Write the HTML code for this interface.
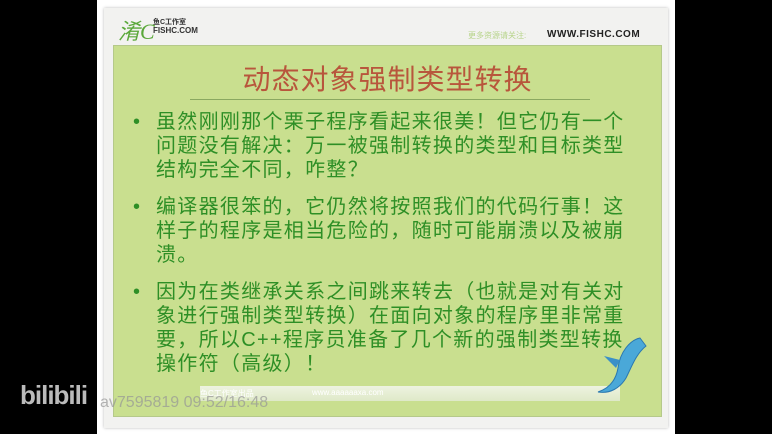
<!DOCTYPE html>
<html><head><meta charset="utf-8"><style>
body{margin:0;width:772px;height:434px;background:#000;position:relative;overflow:hidden;font-family:"Liberation Sans","Noto Sans CJK SC",sans-serif}
.slide{position:absolute;left:97px;top:0;width:578px;height:434px;background:#fff}
.inner{position:absolute;left:104px;top:8px;width:564px;height:420px;background:#f2f2f0;box-shadow:0 0 3px #bbb}
.green{position:absolute;left:113px;top:45px;width:549px;height:372px;background:#c9df8f;border:1px solid #b5c98a;box-sizing:border-box}
.title{position:absolute;left:113px;top:58px;width:549px;text-align:center;font-size:28px;color:#b8563c;letter-spacing:1px}
.hr{position:absolute;left:190px;top:99px;width:400px;height:1px;background:#8aa860}
.line{position:absolute;left:156px;font-size:20px;color:#2e8f26;letter-spacing:1.3px;white-space:nowrap;line-height:24px}
.dot{position:absolute;left:133px;font-size:20px;color:#2e8f26;line-height:24px}
.bar{position:absolute;left:200px;top:386px;width:420px;height:15px;background:linear-gradient(#eef3e0,#dfe9c8);font-size:8px;color:#fff}
</style></head><body>
<div class="slide"></div>
<div class="inner"></div>
<div style="position:absolute;left:118px;top:14px;font-size:22px;font-style:italic;color:#5aa83a;font-family:'Liberation Serif',serif">淆C</div>
<div style="position:absolute;left:153px;top:17px;font-size:7px;font-weight:bold;color:#333">鱼C工作室</div>
<div style="position:absolute;left:153px;top:26px;font-size:8px;font-weight:bold;color:#333">FISHC.COM</div>
<div style="position:absolute;left:468px;top:30px;font-size:8px;color:#b7d48a">更多资源请关注:</div>
<div style="position:absolute;left:547px;top:29px;font-size:10px;font-weight:bold;color:#222;letter-spacing:.5px">WWW.FISHC.COM</div>
<div class="green"></div>
<div class="title">动态对象强制类型转换</div>
<div class="hr"></div>
<div class="dot" style="top:110px">•</div>
<div class="line" style="top:110px">虽然刚刚那个栗子程序看起来很美！但它仍有一个</div>
<div class="line" style="top:134px">问题没有解决：万一被强制转换的类型和目标类型</div>
<div class="line" style="top:158px">结构完全不同，咋整？</div>
<div class="dot" style="top:195px">•</div>
<div class="line" style="top:195px">编译器很笨的，它仍然将按照我们的代码行事！这</div>
<div class="line" style="top:219px">样子的程序是相当危险的，随时可能崩溃以及被崩</div>
<div class="line" style="top:243px">溃。</div>
<div class="dot" style="top:280px">•</div>
<div class="line" style="top:280px">因为在类继承关系之间跳来转去（也就是对有关对</div>
<div class="line" style="top:304px">象进行强制类型转换）在面向对象的程序里非常重</div>
<div class="line" style="top:328px">要，所以C++程序员准备了几个新的强制类型转换</div>
<div class="line" style="top:352px">操作符（高级）！</div>
<div class="bar"><span style="position:absolute;left:0;top:2px">鱼C工作室出品</span><span style="position:absolute;left:112px;top:2px;color:#fff">www.aaaaaaxa.com</span></div>
<svg style="position:absolute;left:590px;top:330px" width="60" height="70" viewBox="0 0 60 70"><path d="M50 8 C40 10 30 22 28 38 C26 50 20 58 8 62 C20 64 30 58 36 48 C42 36 46 24 56 16 Z" fill="#4aa8d8" stroke="#2a78b0"/><path d="M30 30 L14 26 L26 38Z" fill="#3a90c8"/></svg>
<div style="position:absolute;left:20px;top:380px;font-size:26px;font-weight:bold;color:#bbb;letter-spacing:-1px">bilibili</div>
<div style="position:absolute;left:100px;top:394px;font-size:16px;color:rgba(150,150,150,.7)">av7595819 09:52/16:48</div>
</body></html>
